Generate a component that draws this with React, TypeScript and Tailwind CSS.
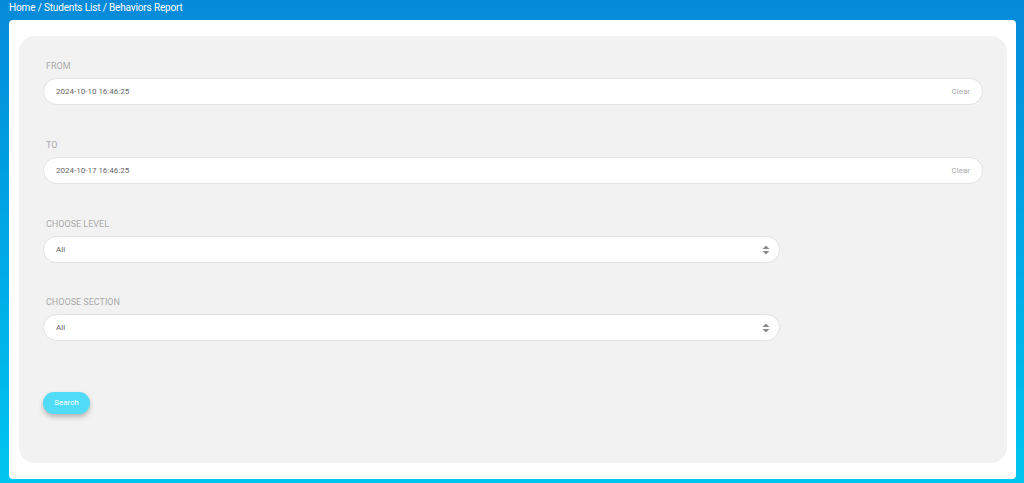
import React from 'react';

const Field = ({ label, value, clear }: { label: string; value: string; clear?: boolean }) => (
  <div className="flex flex-col">
    <label className="text-[9px] uppercase text-[#ababab] pl-[3px] h-[12px] leading-[12px] mb-[6px]">{label}</label>
    <div className="h-[27px] w-full bg-white rounded-full border border-[#e3e3e3] flex items-center justify-between pl-[12px] pr-[12px]">
      <span className="text-[8px] text-[#666]">{value}</span>
      {clear && <span className="text-[8px] text-[#aaa]">Clear</span>}
    </div>
  </div>
);

const SelectField = ({ label }: { label: string }) => (
  <div className="flex flex-col">
    <label className="text-[9px] uppercase text-[#ababab] pl-[3px] h-[12px] leading-[12px] mb-[6px]">{label}</label>
    <div className="h-[27px] w-[737px] bg-white rounded-full border border-[#e3e3e3] flex items-center justify-between pl-[12px] pr-[9px]">
      <span className="text-[8px] text-[#666]">All</span>
      <svg width="8" height="10" viewBox="0 0 8 10" className="text-[#8a8a8a]">
        <path d="M4 0.5 L7.5 4 L0.5 4 Z" fill="currentColor" />
        <path d="M4 9.5 L7.5 6 L0.5 6 Z" fill="currentColor" />
      </svg>
    </div>
  </div>
);

export default function App() {
  return (
    <div className="w-[1024px] h-[483px] bg-gradient-to-b from-[#068ad9] to-[#00c6ef] font-['Roboto',sans-serif] flex flex-col">
      <div className="h-[20px] px-[9px] flex items-start">
        <p className="text-[10px] text-white leading-[15px] tracking-[-0.15px]">Home / Students List / Behaviors Report</p>
      </div>
      <div className="mx-[9px] w-[1007px] h-[459px] bg-white rounded-[4px] pt-[16px] pl-[10px] pr-[9px] pb-[16px]">
        <div className="h-[427px] bg-[#f2f2f2] rounded-[16px] px-[24px] pt-[24px] flex flex-col">
          <Field label="From" value="2024-10-10 16:46:25" clear />
          <div className="h-[34px] shrink-0" />
          <Field label="To" value="2024-10-17 16:46:25" clear />
          <div className="h-[34px] shrink-0" />
          <SelectField label="Choose Level" />
          <div className="h-[33px] shrink-0" />
          <SelectField label="Choose Section" />
          <div className="h-[51px] shrink-0" />
          <button className="w-[47px] h-[22px] rounded-full bg-[#50dcf7] text-white text-[8px] shadow-[0_3px_5px_rgba(0,0,0,0.25)]">Search</button>
        </div>
      </div>
    </div>
  );
}
